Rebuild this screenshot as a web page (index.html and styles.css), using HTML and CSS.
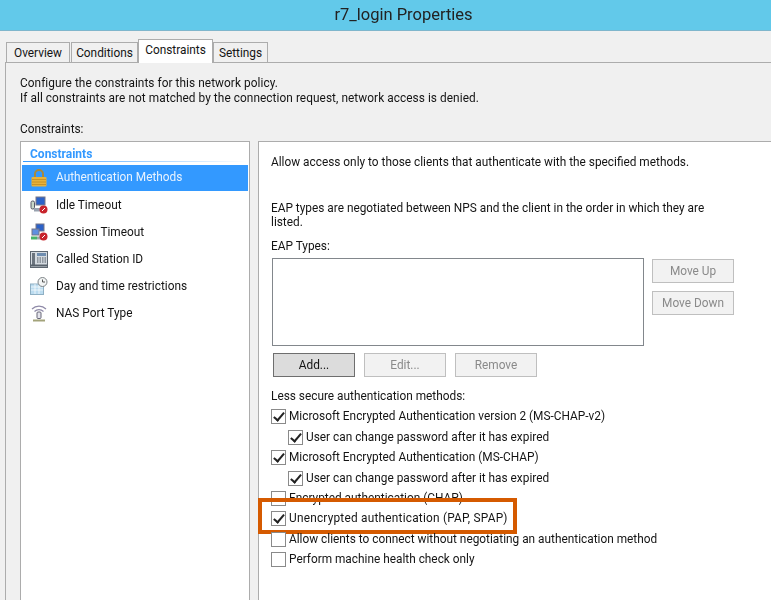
FILE: index.html
```html
<!DOCTYPE html>
<html>
<head>
<meta charset="UTF-8">
<title>r7_login Properties</title>
<link rel="stylesheet" href="styles.css">
</head>
<body>
	<div class="titlebar">r7_login Properties</div>

	<div class="tabs">
		<div class="tab tab-overview">Overview</div>
		<div class="tab tab-conditions">Conditions</div>
		<div class="tab tab-active">Constraints</div>
		<div class="tab tab-settings">Settings</div>
	</div>

	<div class="page">
		<p class="intro">Configure the constraints for this network policy.<br>If all constraints are not matched by the connection request, network access is denied.</p>
		<div class="caption">Constraints:</div>

		<div class="columns">
			<div class="side">
				<div class="side-title">Constraints</div>
				<div class="side-rule"></div>
				<div class="side-row selected">
					<svg class="ico" viewBox="0 0 18 18"><path d="M5 9V5a4 4 0 0 1 8 0v4" fill="none" stroke="#a88a3c" stroke-width="2"/><rect x="1.500" y="8" width="15" height="9.500" rx="1" fill="#e8b23a"/><path d="M2 10.500h14M2 13h14M2 15.500h14" stroke="#c08c22" stroke-width=".8"/></svg>
					Authentication Methods
				</div>
				<div class="side-row">
					<svg class="ico" viewBox="0 0 18 18"><rect x="1" y="5" width="3.500" height="8" rx="1.500" fill="#c9d8c9" stroke="#556"/><rect x="6" y="1" width="9" height="8" fill="#2c62c8" stroke="#778"/><rect x="4" y="12" width="9" height="3.500" fill="#99a3b0"/><circle cx="13.500" cy="13.500" r="4" fill="#c8242c"/><path d="M12 15l3-3" stroke="#fff"/></svg>
					Idle Timeout
				</div>
				<div class="side-row">
					<svg class="ico" viewBox="0 0 18 18"><rect x="6" y="1" width="8" height="7" fill="#2c62c8" stroke="#778"/><rect x="2" y="6" width="7" height="6" fill="#5f8fe0" stroke="#778"/><rect x="1" y="13.500" width="6" height="3" fill="#49b36a"/><rect x="7" y="13.500" width="5" height="3" fill="#9aa"/><circle cx="13.500" cy="13.500" r="4" fill="#c8242c"/><path d="M12 15l3-3" stroke="#fff"/></svg>
					Session Timeout
				</div>
				<div class="side-row">
					<svg class="ico" viewBox="0 0 18 18"><rect x=".5" y="1.500" width="17" height="16" fill="#d4dae0" stroke="#5d6670"/><rect x="2" y="3" width="3" height="12" fill="#6b747e"/><rect x="7" y="3" width="9" height="3" fill="#6f8db0"/><path d="M7 8h9M7 10h9M7 12h9" stroke="#4d5660" stroke-dasharray="1.500 1"/><path d="M1 15.500h16" stroke="#59626c" stroke-width="2"/></svg>
					Called Station ID
				</div>
				<div class="side-row">
					<svg class="ico" viewBox="0 0 18 18"><rect x=".5" y="7" width="13" height="10.500" fill="#bcdcf0" stroke="#8fb0c4"/><path d="M1 10h12M1 13h12M5 7v10M9 7v10" stroke="#fff" stroke-width=".7"/><circle cx="12.500" cy="5" r="4.500" fill="#f2f4f4" stroke="#7d8387"/><path d="M12.500 2.500V5H15" fill="none" stroke="#555"/></svg>
					Day and time restrictions
				</div>
				<div class="side-row">
					<svg class="ico" viewBox="0 0 18 18"><path d="M2 5a10 10 0 0 1 14 0M4.500 7.500a6.500 6.500 0 0 1 9 0" fill="none" stroke="#8f8aa8" stroke-width="1.200"/><rect x="7" y="8" width="4" height="6.500" rx="1" fill="#e4e4ec" stroke="#667"/><path d="M3 16.500h12" stroke="#a3a37a" stroke-width="2"/></svg>
					NAS Port Type
				</div>
			</div>

			<div class="main">
				<p class="allow">Allow access only to those clients that authenticate with the specified methods.</p>
				<p class="eap-text">EAP types are negotiated between NPS and the client in the order in which they are listed.</p>
				<div class="eap-label">EAP Types:</div>

				<div class="eap-row">
					<div class="eap-list"></div>
					<div class="move-btns">
						<div class="btn disabled">Move Up</div>
						<div class="btn disabled">Move Down</div>
					</div>
				</div>
				<div class="eap-btns">
					<div class="btn default">Add...</div>
					<div class="btn disabled">Edit...</div>
					<div class="btn disabled">Remove</div>
				</div>

				<div class="less">Less secure authentication methods:</div>
				<div class="checks">
					<div class="check gap-first"><span class="box on"></span>Microsoft Encrypted Authentication version 2 (MS-CHAP-v2)</div>
					<div class="check sub"><span class="box on"></span>User can change password after it has expired</div>
					<div class="check"><span class="box on"></span>Microsoft Encrypted Authentication (MS-CHAP)</div>
					<div class="check sub"><span class="box on"></span>User can change password after it has expired</div>
					<div class="check"><span class="box"></span>Encrypted authentication (CHAP)</div>
					<div class="check marked"><span class="box on"></span>Unencrypted authentication (PAP, SPAP)<div class="highlight"></div></div>
					<div class="check"><span class="box"></span>Allow clients to connect without negotiating an authentication method</div>
					<div class="check"><span class="box"></span>Perform machine health check only</div>
				</div>
			</div>
		</div>
	</div>
</body>
</html>
```

FILE: styles.css
```css
html, body { margin: 0; padding: 0; height: 600px; overflow: hidden; }
/* the reference is a scaled-up capture, so everything is a little soft */
body { background: #f0f0f0; color: #141414; font-family: Roboto, "Liberation Sans", sans-serif; font-size: 11.85px; line-height: 15px; filter: blur(.3px); }

/* title bar */
.titlebar { height: 30px; line-height: 30px; background: #62c9ea; border-bottom: 1px solid #7fb6cc; text-align: center; font-size: 16.500px; padding-left: 36px; color: #222; }

/* tabs */
.tabs { display: flex; align-items: flex-end; height: 31px; padding-left: 6px; position: relative; z-index: 1; }
.tab { height: 19px; line-height: 21px; border: 1px solid #acacac; border-bottom: 0; background: #f0f0f0; text-align: center; margin-right: 1px; }
.tab-overview { width: 62px; }
.tab-conditions { width: 65px; margin-right: 0; }
.tab-settings { width: 53px; }
.tab-active { width: 73px; height: 23px; line-height: 20px; background: #fff; margin-bottom: -1px; margin-right: 0; }

/* panel under the tabs */
.page { margin-left: 5px; height: 538px; border: 1px solid #acacac; border-width: 1px 0 0 1px; background: #f0f0f0; padding: 13px 0 0 14px; box-sizing: border-box; overflow: hidden; }
.intro { margin: 0; letter-spacing: .06px; }
.caption { margin-top: 16px; height: 19px; }

.columns { display: flex; gap: 8px; }

/* left list */
.side { width: 226px; height: 459px; background: #fff; border: 1px solid #acacac; border-bottom: 0; padding: 0 1px; flex: none; }
.side-title { color: #3399ff; font-weight: 700; font-size: 12px; padding: 5px 0 0 8px; height: 14px; }
.side-rule { height: 1px; margin: 0 1px 3px; background: linear-gradient(to right, #3399ff, #ffffff); }
.side-row { height: 26px; padding-bottom: 1px; display: flex; align-items: center; gap: 8px; padding-left: 8px; }
.side-row.selected { background: #3399ff; color: #e8f3ff; height: 25px; padding: 0 0 1px 8px; margin-bottom: 1px; }
.ico { width: 18px; height: 18px; flex: none; }

/* right pane */
.main { flex: 1; height: 459px; background: #fff; border: 1px solid #acacac; border-width: 1px 0 0 1px; padding: 13px 0 0 12px; box-sizing: border-box; }
.main p { margin: 0; width: 460px; }
.main .eap-text { padding-top: 31px; line-height: 14px; }
.eap-label { margin-top: 10px; height: 19px; }
.eap-row { display: flex; gap: 8px; margin-left: 1px; }
.eap-list { width: 370px; height: 86px; background: #fff; border: 1px solid #82878c; flex: none; }
.move-btns { display: flex; flex-direction: column; gap: 8px; padding-top: 1px; }
.eap-btns { display: flex; gap: 9px; margin: 7px 0 0 2px; }

.btn { width: 80px; height: 22px; line-height: 23px; text-align: center; border: 1px solid #acacac; background: #f0f0f0; }
.btn.disabled { color: #8a8a8a; border-color: #bfbfbf; background: #f2f2f2; }
.btn.default { background: #dcdcdc; border-color: #6e6e6e; }

.less { margin-top: 12px; }

/* checkboxes */
.check { display: flex; align-items: center; gap: 3px; height: 20.500px; position: relative; }
.check.gap-first { margin-top: 2px; }
.check.sub { padding-left: 17px; padding-top: 2px; height: 18.500px; }
.check.marked { letter-spacing: .22px; }
.box { width: 13px; height: 13px; border: 1px solid #8a8a8a; background: #fff; flex: none; position: relative; }
.box.on::after { content: ""; position: absolute; left: 4px; top: 0; width: 4px; height: 9px; border: solid #222; border-width: 0 2px 2px 0; transform: rotate(40deg); }

/* orange marker drawn on top of the rows */
.highlight { position: absolute; left: -13px; top: -11px; width: 251px; height: 28px; border: 4px solid #d55a00; }
```
